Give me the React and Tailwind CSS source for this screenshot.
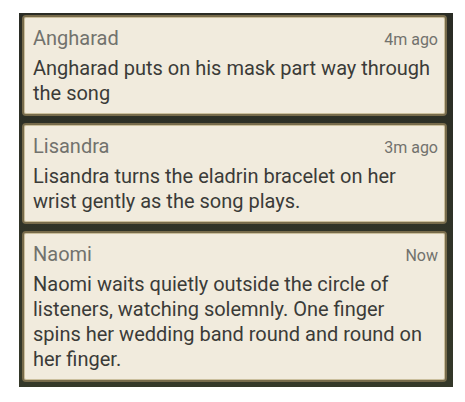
const messages = [
  {
    name: 'Angharad',
    time: '4m ago',
    lines: ['Angharad puts on his mask part way through', 'the song']
  },
  {
    name: 'Lisandra',
    time: '3m ago',
    lines: ['Lisandra turns the eladrin bracelet on her', 'wrist gently as the song plays.']
  },
  {
    name: 'Naomi',
    time: 'Now',
    lines: [
      'Naomi waits quietly outside the circle of',
      'listeners, watching solemnly. One finger',
      'spins her wedding band round and round on',
      'her finger.'
    ]
  }
]

function MessageCard({ msg }) {
  return (
    <div className="rounded-[4px] border-2 border-[#776b4b] bg-[#f1ebdd] pl-[9px] pr-[7px] pt-[9px] pb-[8px] shadow-[inset_0_0_0_1px_#cbbf9d]">
      <div className="flex items-baseline justify-between leading-[25px]">
        <span className="text-[20px] text-[#72726d]">{msg.name}</span>
        <span className="text-[16px] text-[#72726d]">{msg.time}</span>
      </div>
      <p className="mt-[4px] text-[20px] leading-[25px] text-[#3b3b38]">
        {msg.lines.map((l, i) => (
          <span key={i} className="block whitespace-nowrap">{l}</span>
        ))}
      </p>
    </div>
  )
}

export default function App() {
  return (
    <div className="min-h-screen bg-white pl-[19px] pt-[13px] font-['Roboto',sans-serif]">
      <div className="w-[434px] bg-[#2c2e25] bg-gradient-to-b from-[#2a2c25] to-[#343829] pl-[3px] pr-[6px] pt-[2px] pb-[5px]">
        <div className="flex flex-col gap-[7px]">
          {messages.map(m => (
            <MessageCard key={m.name} msg={m} />
          ))}
        </div>
      </div>
    </div>
  )
}
